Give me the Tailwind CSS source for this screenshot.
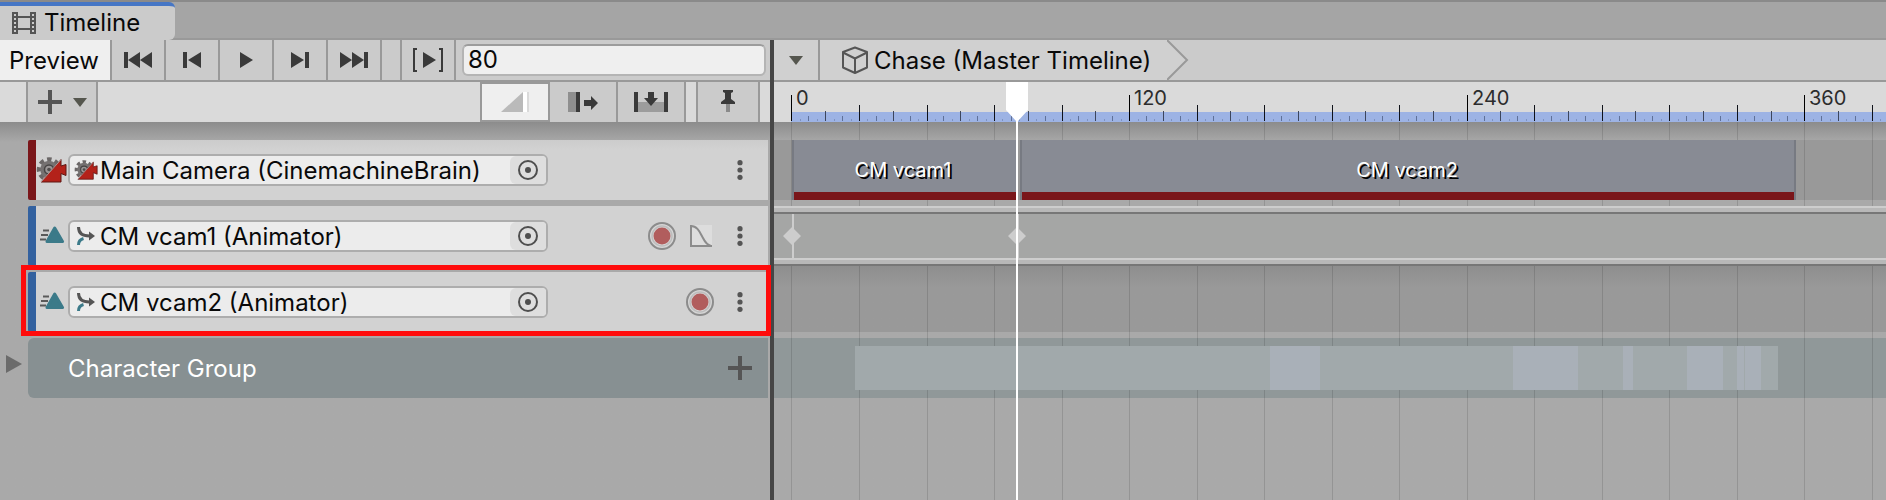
<!DOCTYPE html>
<html lang="en">
<head>
    <meta charset="UTF-8">
    <meta name="viewport" content="width=device-width, initial-scale=1.0">
    <title>Timeline</title>
    <script src="https://cdn.jsdelivr.net/npm/@tailwindcss/browser@4"></script>
</head>
<body class="bg-[#a9a9a9] min-h-screen flex flex-col overflow-hidden font-['Inter',sans-serif] text-2xl leading-8 text-[#090909]">

    <!-- Shared icons -->
    <svg class="hidden">
        <symbol id="icon-cinemachine" viewBox="0 0 30 26">
            <circle cx="12.500" cy="12.500" r="10" fill="none" stroke="#6b6767" stroke-width="4.500" stroke-dasharray="4.400 3.454" stroke-dashoffset="2.200"/>
            <circle cx="12.500" cy="12.500" r="8.800" fill="#757171"/>
            <circle cx="12.500" cy="12.500" r="4.500" fill="#9a9696" stroke="#474444" stroke-width="1.500"/>
            <circle cx="12.500" cy="12.500" r="1.800" fill="#4f4c4c"/>
            <path d="M4.500 25 24.500 2.500V9l5-1.500v11l-5-2v8.500z" fill="#b3221a" stroke="#5e1613" stroke-width="1"/>
            <path d="M4.500 25 24.500 2.500" stroke="#d8d0d0" stroke-width="0.700"/>
        </symbol>
        <symbol id="icon-anim-track" viewBox="0 0 26 20">
            <path d="M3 4.500h6M1 9h7M0 13.500h6" stroke="#5a5a5a" stroke-width="2"/>
            <path d="M14.700 2 22.500 15.500H7z" fill="#3b7a89" stroke="#3b7a89" stroke-width="3" stroke-linejoin="round"/>
        </symbol>
        <symbol id="icon-animator" viewBox="0 0 18 18">
            <path d="M1.500 0c0 6 3.500 9 11 9" fill="none" stroke="#555" stroke-width="3"/>
            <path d="M12 4.500 18 9l-6 4.500z" fill="#555"/>
            <path d="M1.500 18c0-4 1.500-5.500 5-6.500" fill="none" stroke="#3b7a89" stroke-width="3"/>
        </symbol>
        <symbol id="icon-picker" viewBox="0 0 20 20">
            <circle cx="10" cy="10" r="9" fill="none" stroke="#4f4f4f" stroke-width="2"/>
            <circle cx="10" cy="10" r="3" fill="#4f4f4f"/>
        </symbol>
        <symbol id="icon-dots" viewBox="0 0 6 20">
            <circle cx="3" cy="2.700" r="2.600" fill="#555"/>
            <circle cx="3" cy="10" r="2.600" fill="#555"/>
            <circle cx="3" cy="17.300" r="2.600" fill="#555"/>
        </symbol>
        <symbol id="icon-record" viewBox="0 0 28 28">
            <circle cx="14" cy="14" r="13" fill="#d6d6d6" stroke="#8c8c8c" stroke-width="2"/>
            <circle cx="14" cy="14" r="10" fill="none" stroke="#bdbdbd" stroke-width="1.500"/>
            <circle cx="14" cy="14" r="8.500" fill="#b15d5d"/>
        </symbol>
        <symbol id="icon-plus" viewBox="0 0 24 24">
            <path d="M12 0v24M0 12h24" stroke="#555" stroke-width="4"/>
        </symbol>
        <symbol id="icon-down" viewBox="0 0 14 9">
            <path d="M0 0h14L7 9z" fill="#55564e"/>
        </symbol>
    </svg>

    <!-- Tab bar -->
    <div class="flex h-10 shrink-0 border-t-2 border-[#8a8a8a] bg-[#a5a5a5] shadow-[inset_0_-2px_0_#999999]">
        <a href="#" class="flex w-[175px] items-center gap-2 rounded-r-md border-t-4 border-[#4676c5] bg-[#cbcbcb] pl-3">
            <svg class="h-[22px] w-6" viewBox="0 0 24 22">
                <path d="M0 0h6v22H0zM18 0h6v22h-6z" fill="#555"/>
                <path d="M6 5h12M6 17h12" stroke="#555" stroke-width="2"/>
                <path d="M3 2v18M21 2v18" stroke="#cbcbcb" stroke-width="2" stroke-dasharray="2 2"/>
            </svg>
            Timeline
        </a>
    </div>

    <div class="flex flex-1">
        <!-- Left panel: toolbar and track headers -->
        <section class="flex w-[770px] shrink-0 flex-col">
            <div class="flex h-[42px] border-b-2 border-[#999999] bg-[#cbcbcb]">
                <button class="w-28 border-r-2 border-[#999999] bg-[#efefef] pr-0.5 pt-0.5">Preview</button>
                <button aria-label="First frame" class="flex w-[54px] items-center justify-center border-r-2 border-[#999999]">
                    <svg class="h-4 w-7" viewBox="0 0 28 16" fill="#3a3a3a"><path d="M0 0h4v16H0zM16 0v16L4 8zM28 0v16L16 8z"/></svg>
                </button>
                <button aria-label="Previous frame" class="flex w-[54px] items-center justify-center border-r-2 border-[#999999]">
                    <svg class="h-4 w-[18px]" viewBox="0 0 18 16" fill="#3a3a3a"><path d="M0 0h4v16H0zM18 0v16L5 8z"/></svg>
                </button>
                <button aria-label="Play" class="flex w-[54px] items-center justify-center border-r-2 border-[#999999]">
                    <svg class="h-4 w-[13px]" viewBox="0 0 13 16" fill="#3a3a3a"><path d="M0 0v16l13-8z"/></svg>
                </button>
                <button aria-label="Next frame" class="flex w-[54px] items-center justify-center border-r-2 border-[#999999]">
                    <svg class="h-4 w-[18px]" viewBox="0 0 18 16" fill="#3a3a3a"><path d="M0 0v16l13-8zM14 0h4v16h-4z"/></svg>
                </button>
                <button aria-label="Last frame" class="flex w-[54px] items-center justify-center border-r-2 border-[#999999]">
                    <svg class="h-4 w-7" viewBox="0 0 28 16" fill="#3a3a3a"><path d="M0 0v16l12-8zM12 0v16l12-8zM24 0h4v16h-4z"/></svg>
                </button>
                <div class="w-5 border-r-2 border-[#999999]"></div>
                <button aria-label="Play range" class="flex w-[54px] items-center justify-center border-r-2 border-[#999999]">
                    <svg class="h-6 w-8" viewBox="0 0 32 24" fill="#3a3a3a">
                        <path d="M5 1H2v22h3M27 1h3v22h-3" fill="none" stroke="#3a3a3a" stroke-width="2"/>
                        <path d="M11 4v16l13-8z"/>
                    </svg>
                </button>
                <div class="flex flex-1 items-center pl-1.5 pr-1">
                    <input aria-label="Current frame" value="80" class="h-8 w-full rounded-md border-2 border-[#b4b4b4] border-t-[#9c9c9c] bg-[#efefef] px-1">
                </div>
            </div>

            <div class="flex h-10 bg-[#dadada]">
                <button aria-label="Add track" class="ml-[26px] flex w-[72px] items-center gap-[11px] border-x-2 border-[#999999] bg-[#cbcbcb] pl-2.5">
                    <svg class="size-6"><use href="#icon-plus"/></svg>
                    <svg class="h-[9px] w-[14px]"><use href="#icon-down"/></svg>
                </button>
                <div class="flex-1"></div>
                <button aria-label="Mix mode" class="flex w-[70px] items-center justify-center border-2 border-[#999999] bg-[#efefef]">
                    <svg class="h-5 w-7" viewBox="0 0 28 20">
                        <path d="M0 20 22 0v20z" fill="#bababa"/><path d="M22 0h4v20h-4z" fill="#fff"/><path d="M26 0h2v20h-2z" fill="#dadada"/>
                    </svg>
                </button>
                <button aria-label="Ripple mode" class="flex w-[68px] items-center justify-center border-r-2 border-[#999999] bg-[#cbcbcb]">
                    <svg class="h-5 w-[30px]" viewBox="0 0 30 20" fill="#3a3a3a">
                        <path d="M0 0h8v20H0z" fill="#8f8f8f"/><path d="M8 0h4v20H8zM16 8h7V4l7 7-7 7v-4h-7z"/>
                    </svg>
                </button>
                <button aria-label="Replace mode" class="flex w-[68px] items-center justify-center border-r-2 border-[#999999] bg-[#cbcbcb]">
                    <svg class="h-5 w-[34px]" viewBox="0 0 34 20" fill="#3a3a3a">
                        <path d="M4 10h26v10H4z" fill="#9c9c9c"/><path d="M0 0h4v20H0zM30 0h4v20h-4zM14 0h6v6h4l-7 8-7-8h4z"/>
                    </svg>
                </button>
                <div class="w-3 border-r-2 border-[#999999]"></div>
                <button aria-label="Markers" class="mr-2.5 flex w-[62px] items-center justify-center border-r-2 border-[#999999] bg-[#cbcbcb]">
                    <svg class="h-6 w-[14px]" viewBox="0 0 14 24" fill="#3a3a3a">
                        <path d="M2 0h10v2l-2 1v6l4 3v2H0v-2l4-3V3L2 2z"/><path d="M5 14h4v8H5z" fill="#8a8a8a"/>
                    </svg>
                </button>
            </div>

            <!-- Track headers -->
            <div class="flex flex-1 flex-col gap-1.5 bg-linear-to-b from-[#8c8c8c] to-[#a9a9a9] to-[20px] pl-7 pr-0.5 pt-[18px]">
                <div class="flex h-[60px] items-center rounded-l-xs border-l-8 border-[#7a161a] bg-linear-to-b from-[#cccccc] to-[#d2d2d2] to-[10px] pr-[25px]">
                    <svg class="h-[26px] w-[31px]"><use href="#icon-cinemachine"/></svg>
                    <div class="ml-px flex h-8 w-[480px] overflow-hidden rounded-md border-2 border-[#adadad] bg-[#ececec]">
                        <div class="flex flex-1 items-center gap-0.5 pl-1 whitespace-nowrap">
                            <svg class="h-5 w-6"><use href="#icon-cinemachine"/></svg>
                            <span class="pt-0.5">Main Camera (CinemachineBrain)</span>
                        </div>
                        <button aria-label="Pick Main Camera" class="flex w-9 items-center justify-center rounded-l-md bg-[#dedede]">
                            <svg class="size-5"><use href="#icon-picker"/></svg>
                        </button>
                    </div>
                    <button aria-label="Main Camera menu" class="ml-auto"><svg class="h-5 w-1.5"><use href="#icon-dots"/></svg></button>
                </div>

                <div class="flex h-[60px] items-center rounded-l-xs border-l-8 border-[#33619f] bg-[#d2d2d2] pr-[25px]">
                    <svg class="ml-1 h-5 w-[26px]"><use href="#icon-anim-track"/></svg>
                    <div class="ml-0.5 flex h-8 w-[480px] overflow-hidden rounded-md border-2 border-[#adadad] bg-[#ececec]">
                        <div class="flex flex-1 items-center gap-[5px] pl-[7px] whitespace-nowrap">
                            <svg class="size-[18px]"><use href="#icon-animator"/></svg>
                            <span class="pt-0.5">CM vcam1 (Animator)</span>
                        </div>
                        <button aria-label="Pick CM vcam1" class="flex w-9 items-center justify-center rounded-l-md bg-[#dedede]">
                            <svg class="size-5"><use href="#icon-picker"/></svg>
                        </button>
                    </div>
                    <button aria-label="Record CM vcam1" class="ml-auto"><svg class="size-7"><use href="#icon-record"/></svg></button>
                    <button aria-label="Curves" class="ml-3.5">
                        <svg class="size-[22px]" viewBox="0 0 22 22">
                            <path d="M0 0h22v22H0z" fill="#dddddd"/>
                            <path d="M1 0v21h21" fill="none" stroke="#8c8c8c" stroke-width="2"/>
                            <path d="M1 1c7 0 9 7 12 12 2 4 4 7 8 8" fill="none" stroke="#8c8c8c" stroke-width="2"/>
                        </svg>
                    </button>
                    <button aria-label="CM vcam1 menu" class="ml-[25px]"><svg class="h-5 w-1.5"><use href="#icon-dots"/></svg></button>
                </div>

                <div class="relative flex h-[60px] items-center rounded-l-xs border-l-8 border-[#33619f] bg-[#d2d2d2] pr-[25px]">
                    <svg class="ml-1 h-5 w-[26px]"><use href="#icon-anim-track"/></svg>
                    <div class="ml-0.5 flex h-8 w-[480px] overflow-hidden rounded-md border-2 border-[#adadad] bg-[#ececec]">
                        <div class="flex flex-1 items-center gap-[5px] pl-[7px] whitespace-nowrap">
                            <svg class="size-[18px]"><use href="#icon-animator"/></svg>
                            <span class="pt-0.5">CM vcam2 (Animator)</span>
                        </div>
                        <button aria-label="Pick CM vcam2" class="flex w-9 items-center justify-center rounded-l-md bg-[#dedede]">
                            <svg class="size-5"><use href="#icon-picker"/></svg>
                        </button>
                    </div>
                    <button aria-label="Record CM vcam2" class="ml-auto"><svg class="size-7"><use href="#icon-record"/></svg></button>
                    <button aria-label="CM vcam2 menu" class="ml-[23px]"><svg class="h-5 w-1.5"><use href="#icon-dots"/></svg></button>
                    <!-- Highlight -->
                    <div class="pointer-events-none absolute -bottom-1 -left-[15px] -right-[3px] -top-[7px] z-20 border-[5px] border-[#ff0b0b]"></div>
                </div>

                <div class="relative flex h-[60px] items-center rounded-l-md bg-[#879092] pl-10 pr-4 text-white">
                    <button aria-label="Expand Character Group" class="absolute -left-[22px] top-[17px]">
                        <svg class="h-[18px] w-4" viewBox="0 0 16 18"><path d="M0 0v18l16-9z" fill="#6b6b6b"/></svg>
                    </button>
                    <span class="pt-0.5">Character Group</span>
                    <button aria-label="Add to group" class="ml-auto"><svg class="size-6"><use href="#icon-plus"/></svg></button>
                </div>
            </div>
        </section>

        <div class="w-1 shrink-0 bg-[#464646]"></div>

        <!-- Right panel: breadcrumb, ruler and clips -->
        <section class="relative flex min-w-0 flex-1 flex-col overflow-hidden">
            <nav class="flex h-[42px] border-b-2 border-[#999999] bg-[#cbcbcb]">
                <button aria-label="Timeline selector" class="flex w-[46px] items-center justify-center border-r-2 border-[#999999] bg-[#d0d0d0]">
                    <svg class="h-[9px] w-[14px]"><use href="#icon-down"/></svg>
                </button>
                <a href="#" class="flex items-center gap-[5px] bg-[#d0d0d0] pl-[21px] pr-4 whitespace-nowrap">
                    <svg class="h-7 w-7" viewBox="0 0 28 28" fill="none" stroke="#555" stroke-width="2" stroke-linejoin="round">
                        <path d="M14 1.500 26 6v15.500L14 27 2 21.500V6zM2 6.500l12 6 12-6M14 12.500V27"/>
                    </svg>
                    <span class="pt-0.5">Chase (Master Timeline)</span>
                </a>
                <svg class="h-10 w-[22px]" viewBox="0 0 22 40">
                    <path d="M0 0 20 20 0 40z" fill="#d0d0d0"/><path d="M0 0 20 20 0 40" fill="none" stroke="#999" stroke-width="2"/>
                </svg>
            </nav>

            <div class="h-10 bg-[#dadada]">
                <svg id="ruler" class="block h-10 w-full text-xl" fill="#2c2c2c"></svg>
            </div>

            <div class="relative flex flex-1 flex-col bg-linear-to-b from-[#8c8c8c] to-[#a9a9a9] to-[20px] pt-[18px]">
                <svg id="grid" class="absolute inset-0 h-full w-full"></svg>

                <!-- Main Camera clips -->
                <div class="flex h-[60px] bg-[#999999] pl-[18px] text-xl text-white [text-shadow:2px_2px_0_#000000]">
                    <div class="relative flex w-[226px] items-center justify-center border-l-2 border-[#777a82] bg-[#888b94] pr-1.5 shadow-[inset_0_-8px_0_#7a161a]">CM vcam1</div>
                    <div class="relative ml-0.5 flex w-[776px] items-center justify-center border-x-2 border-[#777a82] bg-[#888b94] pr-0.5 shadow-[inset_0_-8px_0_#7a161a]">CM vcam2</div>
                </div>

                <!-- CM vcam1 keys -->
                <div class="relative mt-1.5 h-[60px] border-y-2 border-t-[#cdcdcd] border-b-[#777777] bg-[#b8b8b8] py-1">
                    <div class="h-12 border-y-2 border-t-[#777777] border-b-[#cdcdcd] bg-[#a5a6a5]"></div>
                    <svg class="absolute inset-0 h-full w-full" fill="#cdcdcd">
                        <path d="M18 6h2v44h-2zM9 28l9-9 9 9-9 9zM243 6h2v44h-2zM234 28l9-9 9 9-9 9z"/>
                    </svg>
                </div>

                <!-- CM vcam2, empty -->
                <div class="h-[66px] bg-linear-to-b from-[#8e8e8e] to-[#999999] to-[22px]"></div>

                <!-- Character Group overview -->
                <div class="mt-1.5 h-[60px] bg-[#909899] py-2 pl-[81px]">
                    <svg class="relative h-11 w-[923px]" viewBox="0 0 923 44">
                        <path d="M0 0h923v44H0z" fill="#a1a9ab"/>
                        <path d="M415 0h50v44h-50zM658 0h65v44h-65zM768 0h10v44h-10zM832 0h36v44h-36zM882 0h7v44h-7zM890 0h16v44h-16z" fill="#a9b0b8"/>
                    </svg>
                </div>
            </div>

            <!-- Playhead -->
            <svg class="pointer-events-none absolute left-[232px] top-[42px] z-10 h-full w-[22px]" fill="#fff">
                <path d="M0 0h22v28L12 39v2000h-2V39L0 28z"/>
            </svg>
        </section>
    </div>

    <script>
        const ORIGIN = 17;
        const PX_PER_FRAME = 2.8133;

        // step in frames, tick height, colour
        const TICKS = [
            [120, 26, '#000000'],
            [24, 16, '#10131a'],
            [12, 10, '#3d465c'],
            [6, 5, '#5f7199'],
            [3, 2, '#7f93c0'],
        ];

        const rulerSvg = document.getElementById('ruler');
        const gridSvg = document.getElementById('grid');

        function drawRuler() {
            const lastFrame = (rulerSvg.clientWidth - ORIGIN) / PX_PER_FRAME;
            let ruler = `<rect x="${ORIGIN}" y="30" width="100%" height="10" fill="#9db3e4"/>`;
            let grid = '';

            for (let frame = 0; frame <= lastFrame; frame += 3) {
                const x = Math.ceil(ORIGIN + frame * PX_PER_FRAME);
                const [, height, color] = TICKS.find(([step]) => frame % step === 0);
                ruler += `<rect x="${x}" y="${39 - height}" width="1" height="${height}" fill="${color}"/>`;
                if (frame % 120 === 0) {
                    ruler += `<text x="${x + 5}" y="23">${frame}</text>`;
                }
                if (frame % 24 === 0) {
                    grid += `<rect x="${x}" y="0" width="1" height="100%" fill="#000" fill-opacity="0.12"/>`;
                }
            }

            rulerSvg.innerHTML = ruler;
            gridSvg.innerHTML = grid;
        }

        window.addEventListener('resize', drawRuler);
        window.addEventListener('load', drawRuler);
        drawRuler();
    </script>
</body>
</html>
